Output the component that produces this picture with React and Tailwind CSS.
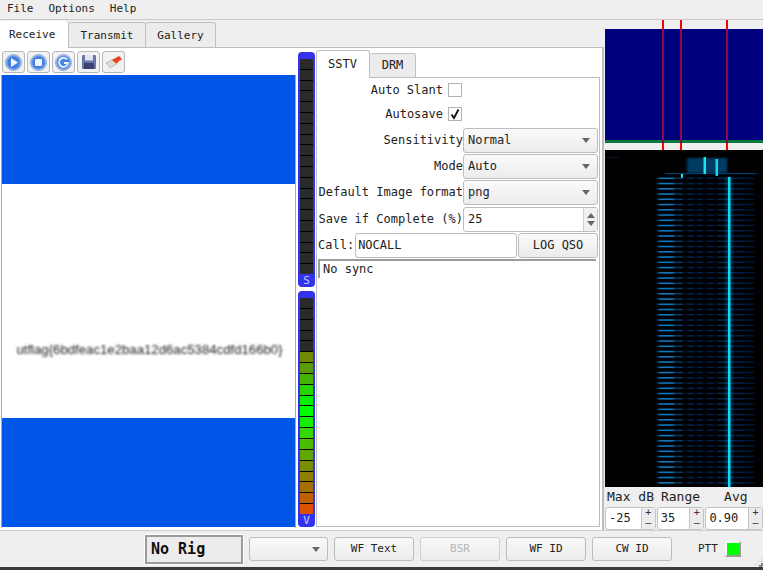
import React from 'react';

const mono = 'font-["DejaVu_Sans_Mono",monospace]';

const rxColors = [
    'bg-[#2a2a2a]', 'bg-[#2a2a2a]', 'bg-[#2a2a2a]', 'bg-[#2a2a2a]', 'bg-[#2a2a2a]',
    'bg-[#738a00]', 'bg-[#5a9c00]', 'bg-[#44b400]', 'bg-[#26d400]', 'bg-[#08f000]',
    'bg-[#00ff00]', 'bg-[#14ee00]', 'bg-[#36d800]', 'bg-[#4cbc00]', 'bg-[#62a600]',
    'bg-[#788e00]', 'bg-[#8f8000]', 'bg-[#a67000]', 'bg-[#be6000]', 'bg-[#dc5000]',
];
const sColors = Array(20).fill('bg-[#2a2a2a]');

function Meter({ colors, label, className }) {
    return (
        <div className={`w-[17px] rounded-[4px] bg-[#3333ee] flex flex-col items-center ${className}`}>
            <div className="h-[7px] w-full shrink-0" />
            <div className="w-[13px] bg-black flex flex-col flex-1 gap-[1px]">
                {colors.map((c, i) => (
                    <div key={i} className={`flex-1 ${c}`} />
                ))}
            </div>
            <div className={`h-[13px] shrink-0 text-[11px] leading-[13px] text-[#c8c8ff] ${mono}`}>{label}</div>
        </div>
    );
}

function ToolButton({ children }) {
    return (
        <button className="w-[23px] h-[22px] rounded-[3px] border border-[#b8b8b8] bg-[#f2f2f2] flex items-center justify-center">
            {children}
        </button>
    );
}

function Orb({ id, children }) {
    return (
        <svg width="17" height="17" viewBox="0 0 17 17">
            <defs>
                <radialGradient id={id} cx="50%" cy="50%" r="50%">
                    <stop offset="0%" stopColor="#4a8ae8" />
                    <stop offset="68%" stopColor="#3d7ce0" />
                    <stop offset="88%" stopColor="#8fb2ea" />
                    <stop offset="100%" stopColor="#c4d4ee" />
                </radialGradient>
            </defs>
            <circle cx="8.5" cy="8.5" r="8" fill={`url(#${id})`} stroke="#7f9ccf" strokeWidth="0.8" />
            {children}
        </svg>
    );
}

function Dropdown({ value, className = '' }) {
    return (
        <div className={`h-[25px] rounded-[3px] border border-[#bdbdbd] bg-gradient-to-b from-[#fafafa] to-[#ececec] flex items-center justify-between pl-[4px] pr-[7px] ${className}`}>
            <span>{value}</span>
            <span className="w-0 h-0 border-x-[4px] border-x-transparent border-t-[5px] border-t-[#666]" />
        </div>
    );
}

function FormRow({ label, children, className = '' }) {
    return (
        <div className={`flex items-center h-[26px] ${className}`}>
            <div className="w-[146px] text-right whitespace-nowrap">{label}</div>
            <div className="w-[135px]">{children}</div>
        </div>
    );
}

function CheckRow({ label, checked }) {
    return (
        <div className="flex items-center h-[24px] justify-start">
            <div className="w-[126px] text-right whitespace-nowrap">{label}</div>
            <div className="ml-[5px] w-[14px] h-[14px] border border-[#b4b4b4] bg-white flex items-center justify-center">
                {checked && (
                    <svg width="12" height="12" viewBox="0 0 12 12">
                        <path d="M2.5 6.5 L5 10 L9.5 1.5" fill="none" stroke="#111" strokeWidth="1.8" />
                    </svg>
                )}
            </div>
        </div>
    );
}

function BarButton({ children, disabled }) {
    return (
        <button className={`w-[80px] h-[24px] rounded-[3px] border text-[11px] bg-gradient-to-b from-[#f8f8f8] to-[#ececec] ${disabled ? 'border-[#cfcfcf] text-[#b4b4b4]' : 'border-[#bcbcbc] text-[#222]'}`}>
            {children}
        </button>
    );
}

function Spin({ value, className }) {
    return (
        <div className={`h-[23px] flex rounded-[3px] border border-[#c4c4c4] bg-white ${className}`}>
            <div className="flex-1 text-[12px] leading-[21px] pl-[3px] text-[#222]">{value}</div>
            <div className="w-[14px] border-l border-[#c4c4c4] bg-[#ececec] flex flex-col items-center text-[10px] leading-[10px] text-[#333]">
                <span>+</span>
                <span>–</span>
            </div>
        </div>
    );
}

// x, width, colour of the blobs that repeat on every row of the signal
const blobs = [
    [53, 17, '#0d78c0'],
    [72, 6, '#083c74'],
    [82, 7, '#062856'],
    [92, 6, '#04224c'],
    [102, 7, '#04224c'],
    [112, 8, '#062856'],
    [121, 6, '#083c74'],
    [128, 12, '#04224c'],
    [141, 8, '#031838'],
];

function Waterfall() {
    const rows = [];
    for (let y = 27.5; y < 337; y += 5.25) rows.push(y);
    return (
        <svg className="block" width="158" height="337" viewBox="0 0 158 337">
            <defs>
                <filter id="soft" x="-20%" y="-20%" width="140%" height="140%"><feGaussianBlur stdDeviation="1.6 0.55" /></filter>
                <filter id="line" x="-100%" y="-5%" width="300%" height="110%"><feGaussianBlur stdDeviation="0.5" /></filter>
                <filter id="haze" x="-30%" y="-30%" width="160%" height="160%"><feGaussianBlur stdDeviation="0.9" /></filter>
                <filter id="glow" x="-100%" y="-5%" width="300%" height="110%"><feGaussianBlur stdDeviation="1.4" /></filter>
                <pattern id="speck" width="4" height="3" patternUnits="userSpaceOnUse">
                    <rect width="4" height="3" fill="#042c50" />
                    <rect width="2" height="1" fill="#0a5c90" />
                    <rect x="2" y="2" width="1" height="1" fill="#0a5c90" />
                </pattern>
            </defs>
            <rect width="158" height="337" fill="#000" />
            <rect x="0" y="7" width="15" height="1" fill="#03142e" />
            <rect x="82" y="8" width="40" height="15" fill="url(#speck)" filter="url(#haze)" />
            <rect x="60" y="23" width="92" height="1.2" fill="#063c6c" filter="url(#soft)" />
            <rect x="98.5" y="7" width="2.5" height="17" fill="#12e6f2" filter="url(#line)" />
            <rect x="110.5" y="9" width="2.5" height="17" fill="#12d8ea" filter="url(#line)" />
            <rect x="76" y="24" width="2" height="4" fill="#18e6f0" />
            <g filter="url(#soft)">
                {rows.map((y) =>
                    blobs.map(([x, w, c]) => (
                        <rect key={`${y}-${x}`} x={x} y={y} width={w} height="1.6" fill={c} />
                    ))
                )}
            </g>
            <rect x="120.5" y="27" width="7" height="310" fill="#0a5c9c" opacity="0.45" filter="url(#glow)" />
            <rect x="123" y="27" width="2.5" height="310" fill="#10dcee" filter="url(#line)" />
        </svg>
    );
}

export default function App() {
    return (
        <div className={`w-[763px] h-[570px] overflow-hidden flex flex-col bg-[#efefef] text-[12px] text-[#222] ${mono}`}>
            {/* Menu */}
            <div className="h-[20px] shrink-0 flex items-center gap-[15px] pl-[7px] text-[11px] border-b border-[#c8c8c8]">
                <span>File</span>
                <span>Options</span>
                <span>Help</span>
            </div>

            <div className="flex h-[510px] shrink-0">
                {/* Left side */}
                <div className="w-[604px] flex flex-col shrink-0">
                    <div className="h-[27px] flex items-end text-[11px] shrink-0">
                        <div className="w-[69px] h-[27px] bg-white border-r border-[#c0c0c0] rounded-t-[3px] pl-[9px] pt-[7px] leading-[14px] relative top-[1px]">Receive</div>
                        <div className="w-[77px] h-[25px] border border-b-0 border-l-0 border-[#c0c0c0] rounded-t-[3px] bg-[#ececec] text-center pt-[6px] leading-[14px]">Transmit</div>
                        <div className="w-[70px] h-[25px] border border-b-0 border-l-0 border-[#c0c0c0] rounded-t-[3px] bg-[#ececec] text-center pt-[6px] leading-[14px]">Gallery</div>
                    </div>
                    <div className="flex-1 bg-white border-t border-r-2 border-b border-[#bdbdbd] flex pt-[3px] pb-[2px]">
                        <div className="w-[297px] flex flex-col shrink-0">
                            <div className="flex gap-[2px] pl-[2px] h-[22px] shrink-0">
                                <ToolButton>
                                    <Orb id="o1"><path d="M6 4 L13 8.5 L6 13 Z" fill="#eef4ff" /></Orb>
                                </ToolButton>
                                <ToolButton>
                                    <Orb id="o2"><rect x="5" y="5" width="7" height="7" rx="1" fill="#eef4ff" /></Orb>
                                </ToolButton>
                                <ToolButton>
                                    <Orb id="o3"><path d="M12 5.5 A4.5 4.5 0 1 0 13 9 L9 9" fill="none" stroke="#eef4ff" strokeWidth="1.8" /></Orb>
                                </ToolButton>
                                <ToolButton>
                                    <svg width="16" height="16" viewBox="0 0 16 16">
                                        <rect x="1" y="1" width="14" height="14" rx="1" fill="#6a76a6" />
                                        <rect x="4" y="1" width="8" height="5.5" fill="#e2e4f0" />
                                        <rect x="3" y="9" width="10" height="6" fill="#3a4370" />
                                    </svg>
                                </ToolButton>
                                <ToolButton>
                                    <svg width="18" height="16" viewBox="0 0 18 16">
                                        <path d="M1 9 L9 5 L13 9 L5 14 Z" fill="#e4dcd0" stroke="#a89f92" strokeWidth="0.6" />
                                        <path d="M7 6 L14 2 L17 5 L11 9.5 Z" fill="#ee4020" />
                                    </svg>
                                </ToolButton>
                            </div>
                            <div className="mt-[2px] ml-[1px] flex-1 flex flex-col border-l border-r border-[#a8a8a8] w-[295px]">
                                <div className="h-[109px] bg-[#0057e7]" />
                                <div className="h-[234px] bg-white flex items-center justify-center">
                                    <span className='font-["Liberation_Sans",sans-serif] text-[13.2px] text-[#222] blur-[0.8px] relative top-[49px] left-[1px]'>
                                        utflag{'{'}6bdfeac1e2baa12d6ac5384cdfd166b0{'}'}
                                    </span>
                                </div>
                                <div className="h-[109px] bg-[#0057e7]" />
                            </div>
                        </div>

                        <div className="w-[17px] ml-[1px] flex flex-col shrink-0 gap-[4px] pt-[1px]">
                            <Meter colors={sColors} label="S" className="h-[235px]" />
                            <Meter colors={rxColors} label="V" className="h-[236px]" />
                        </div>

                        {/* Mode tabs */}
                        <div className="w-[284px] ml-[1px] flex flex-col shrink-0 relative -top-[1px]">
                            <div className="h-[27px] flex items-end shrink-0">
                                <div className="w-[54px] h-[28px] border border-b-0 border-[#c0c0c0] rounded-t-[3px] bg-white relative top-[1px] pl-[11px] pt-[6px] leading-[14px]">SSTV</div>
                                <div className="w-[46px] h-[24px] border border-b-0 border-l-0 border-[#c0c0c0] rounded-t-[3px] bg-[#ececec] text-center pt-[4px] leading-[14px]">DRM</div>
                            </div>
                            <div className="h-[450px] border border-[#bdbdbd] flex flex-col pr-[1px]">
                                <div>
                                    <CheckRow label="Auto Slant" />
                                    <CheckRow label="Autosave" checked />
                                </div>
                                <FormRow label="Sensitivity" className="mt-[1px]"><Dropdown value="Normal" /></FormRow>
                                <FormRow label="Mode"><Dropdown value="Auto" /></FormRow>
                                <FormRow label="Default Image format"><Dropdown value="png" /></FormRow>
                                <FormRow label="Save if Complete (%)" className="mt-[1px]">
                                    <div className="h-[25px] rounded-[3px] border border-[#bdbdbd] flex items-center justify-between pl-[4px]">
                                        <span>25</span>
                                        <div className="w-[14px] h-full border-l border-[#d0d0d0] bg-[#f0f0f0] flex flex-col items-center justify-center gap-[3px]">
                                            <span className="w-0 h-0 border-x-[4px] border-x-transparent border-b-[5px] border-b-[#666]" />
                                            <span className="w-0 h-0 border-x-[4px] border-x-transparent border-t-[5px] border-t-[#666]" />
                                        </div>
                                    </div>
                                </FormRow>
                                <div className="flex items-center h-[26px] gap-[1px] pl-[1px]">
                                    <span>Call:</span>
                                    <div className="w-[162px] h-[25px] rounded-[3px] border border-[#bdbdbd] pl-[2px] leading-[23px]">NOCALL</div>
                                    <button className="w-[80px] h-[25px] rounded-[3px] border border-[#bdbdbd] bg-gradient-to-b from-[#fafafa] to-[#ececec]">LOG QSO</button>
                                </div>
                                <div className="mt-[1px] ml-[1px] mr-[2px] h-[19px] border-l-2 border-t-2 border-[#9c9c9c] pl-[3px] leading-[17px]">No sync</div>
                            </div>
                        </div>
                    </div>
                </div>

                {/* Waterfall side */}
                <div className="w-[159px] flex flex-col shrink-0 pl-[1px]">
                    <div className="relative h-[130px] shrink-0 flex flex-col">
                        <div className="h-[9px] shrink-0" />
                        <div className="h-[111px] bg-[#00007f]" />
                        <div className="h-[3px] bg-[#0a7a3c]" />
                        <div className="absolute top-0 bottom-0 left-[57px] w-[2px] bg-[#ff0000]" />
                        <div className="absolute top-0 bottom-0 left-[75px] w-[2px] bg-[#ff0000]" />
                        <div className="absolute top-0 bottom-0 left-[121px] w-[2px] bg-[#ff0000]" />
                        <div className="absolute top-[9px] h-[114px] left-[57px] w-[2px] bg-[#8a0a50]" />
                        <div className="absolute top-[9px] h-[114px] left-[75px] w-[2px] bg-[#8a0a50]" />
                        <div className="absolute top-[9px] h-[114px] left-[121px] w-[2px] bg-[#8a0a50]" />
                    </div>
                    <Waterfall />
                    <div className="h-[20px] flex items-center pl-[2px] text-[13px] shrink-0 whitespace-pre">
                        <span>Max dB</span>
                        <span className="ml-[7px]">Range</span>
                        <span className="ml-[24px]">Avg</span>
                    </div>
                    <div className="flex gap-[1px] shrink-0">
                        <Spin value="-25" className="w-[51px]" />
                        <Spin value="35" className="w-[48px]" />
                        <Spin value="0.90" className="w-[58px]" />
                    </div>
                </div>
            </div>

            {/* Bottom bar */}
            <div className="h-[37px] shrink-0 flex items-center border-t border-[#cfcfcf] relative">
                <div className="ml-[145px] w-[98px] h-[29px] border-2 border-[#9c9c9c] outline outline-1 outline-white bg-[#ececec] text-[15px] font-bold text-[#111] leading-[25px] pl-[4px]">No Rig</div>
                <div className="ml-[6px]"><Dropdown value="" className="w-[79px] !h-[24px]" /></div>
                <div className="ml-[6px] flex gap-[6px]">
                    <BarButton>WF Text</BarButton>
                    <BarButton disabled>BSR</BarButton>
                    <BarButton>WF ID</BarButton>
                    <BarButton>CW ID</BarButton>
                </div>
                <span className="ml-[26px] text-[11px]">PTT</span>
                <div className="ml-[7px] w-[16px] h-[16px] bg-[#00ff00] border-2 border-t-[#f4f4f4] border-l-[#f4f4f4] border-b-[#9a9a9a] border-r-[#9a9a9a]" />
                {/* resize grip */}
                <svg className="absolute right-0 bottom-0" width="8" height="9" viewBox="0 0 8 9">
                    <rect x="6" y="0" width="1" height="1" fill="#bbb" />
                    <rect x="3" y="3" width="1" height="1" fill="#bbb" />
                    <rect x="6" y="3" width="1" height="1" fill="#bbb" />
                    <rect x="0" y="6" width="1" height="1" fill="#bbb" />
                    <rect x="3" y="6" width="1" height="1" fill="#bbb" />
                    <path d="M4 8 H7 V5" fill="none" stroke="#222" strokeWidth="1" />
                </svg>
            </div>
            <div className="h-[3px] shrink-0 bg-[#3a3a3a]" />
        </div>
    );
}
